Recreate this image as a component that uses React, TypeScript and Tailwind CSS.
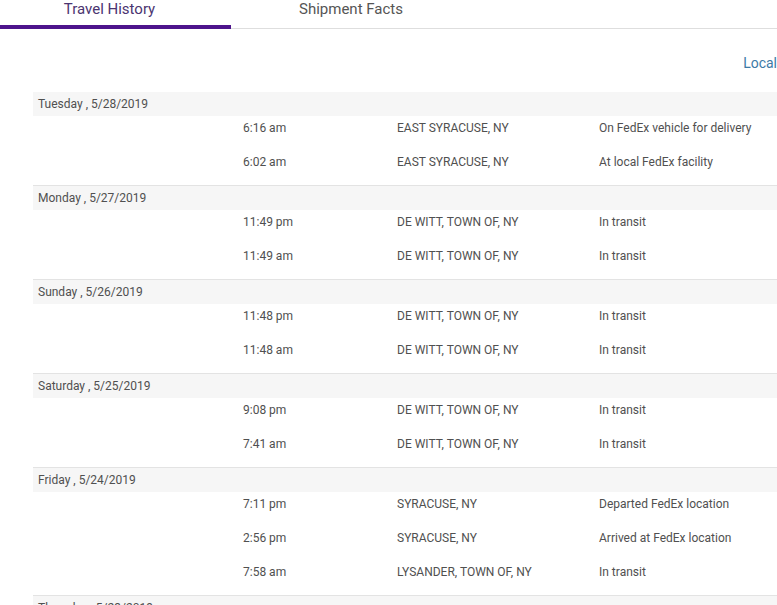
type Scan = { time: string; place: string; status: string }
type Day = { label: string; scans: Scan[] }

const days: Day[] = [
  {
    label: "Tuesday , 5/28/2019",
    scans: [
      { time: "6:16 am", place: "EAST SYRACUSE, NY", status: "On FedEx vehicle for delivery" },
      { time: "6:02 am", place: "EAST SYRACUSE, NY", status: "At local FedEx facility" },
    ],
  },
  {
    label: "Monday , 5/27/2019",
    scans: [
      { time: "11:49 pm", place: "DE WITT, TOWN OF, NY", status: "In transit" },
      { time: "11:49 am", place: "DE WITT, TOWN OF, NY", status: "In transit" },
    ],
  },
  {
    label: "Sunday , 5/26/2019",
    scans: [
      { time: "11:48 pm", place: "DE WITT, TOWN OF, NY", status: "In transit" },
      { time: "11:48 am", place: "DE WITT, TOWN OF, NY", status: "In transit" },
    ],
  },
  {
    label: "Saturday , 5/25/2019",
    scans: [
      { time: "9:08 pm", place: "DE WITT, TOWN OF, NY", status: "In transit" },
      { time: "7:41 am", place: "DE WITT, TOWN OF, NY", status: "In transit" },
    ],
  },
  {
    label: "Friday , 5/24/2019",
    scans: [
      { time: "7:11 pm", place: "SYRACUSE, NY", status: "Departed FedEx location" },
      { time: "2:56 pm", place: "SYRACUSE, NY", status: "Arrived at FedEx location" },
      { time: "7:58 am", place: "LYSANDER, TOWN OF, NY", status: "In transit" },
    ],
  },
  {
    label: "Thursday , 5/23/2019",
    scans: [{ time: "9:12 pm", place: "SYRACUSE, NY", status: "In transit" }],
  },
]

function DayBlock({ day }: { day: Day }) {
  return (
    <div className="border-b border-[#e3e3e3]">
      <div className="h-[24px] bg-[#f6f6f6] pl-[5px] flex items-center">{day.label}</div>
      <div className="pb-[1px]">
        {day.scans.map((s, i) => (
          <div key={i} className="h-[34px] pt-[2px] flex leading-[20px]">
            <div className="w-[210px] shrink-0" />
            <div className="w-[154px] shrink-0">{s.time}</div>
            <div className="w-[202px] shrink-0">{s.place}</div>
            <div className="whitespace-nowrap">{s.status}</div>
          </div>
        ))}
      </div>
    </div>
  )
}

export default function App() {
  return (
    <div className="w-[777px] h-[605px] overflow-hidden bg-white font-['Roboto',sans-serif]">
      <div className="flex h-[29px] border-b border-[#dedede]">
        <div className="w-[231px] h-[29px] -mb-px pr-[12px] border-b-4 border-[#4d148c] text-center text-[15px] leading-[18px] text-[#4b3470]">
          Travel History
        </div>
        <div className="w-[240px] text-center text-[15px] leading-[18px] text-[#555]">Shipment Facts</div>
      </div>
      <div className="mt-[24px] flex justify-end text-[14px] leading-[20px] text-[#3d7aa6]">Local</div>
      <div className="mt-[19px] ml-[33px] text-[12px] text-[#505050]">
        {days.map((d) => (
          <DayBlock key={d.label} day={d} />
        ))}
      </div>
    </div>
  )
}
